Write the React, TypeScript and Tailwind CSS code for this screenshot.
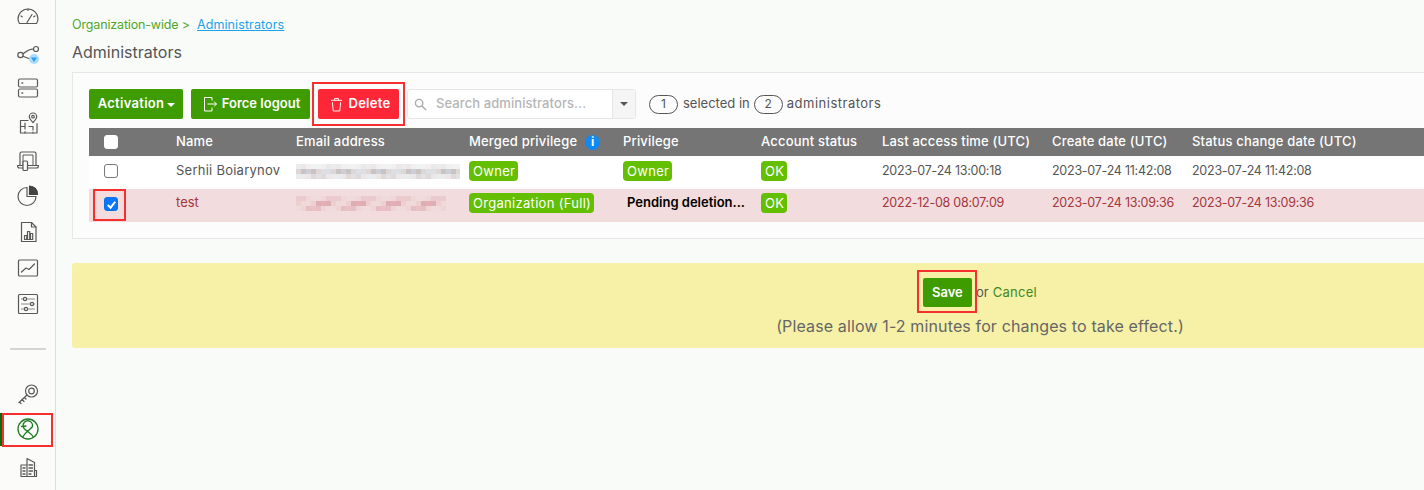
import type { ReactNode } from "react";

const font = "font-['Inter','Liberation_Sans',sans-serif]";
const gridCols = "grid grid-cols-[87px_120px_173px_154px_138px_121px_170px_140px_1fr]";

function SideIcon({ className, children }: { className?: string; children: ReactNode }) {
  return (
    <svg
      viewBox="0 0 28 28"
      fill="none"
      stroke="#585858"
      strokeWidth="1.2"
      strokeLinecap="round"
      strokeLinejoin="round"
      className={`block h-7 w-7 shrink-0 ${className ?? ""}`}
    >
      {children}
    </svg>
  );
}

function Sidebar() {
  return (
    <aside className="relative flex h-full w-[56px] shrink-0 flex-col items-center border-r border-[#dcdedc] bg-[#fbfcfa] pt-[2px]">
      <SideIcon>
        <path d="M5.500 21.500H22.500Q24 19 24 17A10 10 0 0 0 4 17Q4 19 5.500 21.500Z" />
        <path d="M13 20.500 18 12.500M14 7v1.500M7 14l1.200.8M21 14l-1.200.8" />
      </SideIcon>
      <SideIcon className="mt-[11px]">
        <circle cx="6.500" cy="14" r="2.700" />
        <circle cx="22" cy="8" r="2.500" />
        <path d="M9 12.800C12 10.500 14 8 19.500 8M9 15.200 16 18" />
        <circle cx="20" cy="18" r="5" fill="#a9dcff" stroke="none" />
        <path d="M17 16.500h6L20 21Z" fill="#2f9bea" stroke="none" />
      </SideIcon>
      <SideIcon className="mt-[5px]">
        <rect x="4.500" y="5" width="19" height="8" rx="1.500" />
        <rect x="4.500" y="15" width="19" height="8" rx="1.500" />
        <path d="M8 9h.6M8 19h.6" strokeWidth="1.600" />
      </SideIcon>
      <SideIcon className="mt-[9px]">
        <path d="M14 9.500H6.500V22H23V12.500" />
        <path d="M6.500 15.500H11M11 12v6M11 22v-1.500M15 15.500h4V19M19 22v-1" />
        <path d="M19 11.500c-2.200-2.500-3.700-4-3.700-5.800a3.700 3.700 0 0 1 7.400 0c0 1.800-1.500 3.300-3.700 5.800Z" />
        <circle cx="19" cy="5.700" r="1.300" />
      </SideIcon>
      <SideIcon className="mt-[7px]">
        <path d="M6 19V7.500Q6 6 7.500 6h13Q22 6 22 7.500V19" />
        <path d="M9 19V9h10v10" strokeWidth="1" />
        <path d="M3.500 19.500h21Q24.500 22 22.500 22H5.500Q3.500 22 3.500 19.500Z" />
        <rect x="9" y="15" width="4.500" height="9.500" rx="1" fill="#fbfcfa" />
      </SideIcon>
      <SideIcon className="mt-[7px]">
        <path d="M13 6.500A9 9 0 1 0 22 15.500H13Z" />
        <path d="M15.500 5A8 8 0 0 1 23.500 13.500H15.500Z" fill="#444" stroke="#444" />
      </SideIcon>
      <SideIcon className="mt-[9px]">
        <path d="M7.500 4.500H17.500L22 9V23.500H7.500Z" />
        <path d="M17.500 4.500V9H22" />
        <path d="M10.500 17.500h2.200v4h-2.200ZM13.500 13.500h2.200v8h-2.200ZM16.500 15.500h2.200v6h-2.200Z" />
      </SideIcon>
      <SideIcon className="mt-[8px]">
        <rect x="4.500" y="6" width="19" height="16" rx="1" />
        <path d="M7.500 18 12 14l3 1.500 5.500-5.500" />
      </SideIcon>
      <SideIcon className="mt-[8px]">
        <rect x="4.500" y="4.500" width="19" height="19" rx="1" />
        <path d="M7.500 9H20.500M7.500 14H20.500M7.500 19H20.500" stroke="#8a8a8a" />
        <circle cx="11" cy="9" r="1.600" fill="#fbfcfa" />
        <circle cx="18" cy="14" r="1.600" fill="#fbfcfa" />
        <circle cx="12" cy="19" r="1.600" fill="#fbfcfa" />
      </SideIcon>
      <div className="mt-[30px] h-[2px] w-[36px] shrink-0 bg-[#d4d6d4]" />
      <SideIcon className="mt-[30px]">
        <circle cx="17.500" cy="11" r="6" />
        <circle cx="17.500" cy="11" r="2.800" />
        <path d="M13 15 5 22.500M8 19.500l2 2M5.500 22l1.500 1.500M10.500 17.500l1.500 1.500" />
      </SideIcon>
      <SideIcon className="mt-[7px]">
        <g stroke="#1d7a22" strokeWidth="1.300">
          <circle cx="14" cy="14" r="10" />
          <path d="M9 21.500C11 17 16 15 18.500 11.500A4.800 4.800 0 1 0 10 13.500C12 16 17 18 19 21.500" />
          <path d="M7.500 11.500 12 11" />
        </g>
      </SideIcon>
      <SideIcon className="mt-[10px]">
        <path d="M13 23.500V5.500L20.500 9.500V23.500" />
        <path d="M13 12H7V23.500H22.500V17.500H20.500" />
        <path d="M9 15h2M9 18h2M9 21h2M15 12h3.500M15 15h3.500M15 18h3.500M15 21h2" strokeWidth="1.400" />
      </SideIcon>
      <div className="absolute left-0 top-[413px] h-[33px] w-[2px] bg-[#0b6b0b]" />
    </aside>
  );
}

// Blurred-out email address: soft colour blocks, not text
function Mosaic({ tones, width }: { tones: string[]; width: number }) {
  const cells = Math.ceil(width / 5);
  return (
    <svg width={width} height="15" className="block blur-[0.5px]">
      {Array.from({ length: cells * 3 }).map((_, i) => {
        const row = Math.floor(i / cells);
        return (
          <rect
            key={i}
            x={(i % cells) * 5}
            y={row * 5}
            width="5"
            height="5"
            fill={tones[(i * i * 13 + i * 7) % tones.length]}
            opacity={row === 1 ? 0.9 : row === 0 ? 0.35 : 0.55}
          />
        );
      })}
    </svg>
  );
}

function Badge({ children }: { children: ReactNode }) {
  return (
    <span className="inline-block h-[20px] rounded-[4px] bg-[#64bf00] pl-[4px] pr-[3px] text-[13px] leading-[20px] tracking-[0.3px] text-white">
      {children}
    </span>
  );
}

function Checkbox({ checked, white }: { checked?: boolean; white?: boolean }) {
  return (
    <span
      className={`flex h-[14px] w-[14px] items-center justify-center rounded-[3px] border ${
        checked ? "border-[#0b6ff2] bg-[#0b76f7]" : white ? "border-white bg-white" : "border-[#767676] bg-white"
      }`}
    >
      {checked && (
        <svg viewBox="0 0 12 12" className="h-[11px] w-[11px]" fill="none" stroke="#fff" strokeWidth="2.200">
          <path d="M2 6.500 5 9.500 10 3" />
        </svg>
      )}
    </span>
  );
}

function Pill({ children }: { children: ReactNode }) {
  return (
    <span className="flex h-[19px] w-[29px] items-center justify-center rounded-full border border-[#555] text-[12px] text-[#555]">
      {children}
    </span>
  );
}

function Toolbar() {
  return (
    <div className="flex h-[30px] items-center">
      <button className="flex h-[30px] w-[94px] items-center justify-center gap-[3px] rounded-[2px] bg-[#3e9c00] pl-[1px] text-[13px] font-semibold tracking-[0.3px] text-white">
        Activation
        <span className="mt-[1px] h-0 w-0 border-x-[4px] border-t-[4px] border-x-transparent border-t-white" />
      </button>
      <button className="ml-[8px] flex h-[30px] w-[119px] items-center justify-center gap-[4px] rounded-[2px] bg-[#3e9c00] pl-[1px] text-[13px] font-semibold text-white">
        <svg viewBox="0 0 16 16" className="h-[16px] w-[16px]" fill="none" stroke="#fff" strokeWidth="1">
          <path d="M10 4.500V1.500H2.500V15H10V11.500" />
          <path d="M5.500 8H14.500M12 5.500 14.500 8 12 10.500" />
        </svg>
        Force logout
      </button>
      <button className="ml-[8px] flex h-[30px] w-[81px] items-center justify-center gap-[5px] rounded-[2px] bg-[#ff2638] pl-[4px] text-[13px] font-semibold tracking-[0.3px] text-white">
        <svg viewBox="0 0 14 16" className="h-[15px] w-[13px]" fill="none" stroke="#fff" strokeWidth="1">
          <path d="M1 3.500H13M5 3.500V1.500H9V3.500M2.500 5.500 3.500 15H10.500L11.500 5.500" />
        </svg>
        Delete
      </button>
      <div className="ml-[8px] flex h-[30px] w-[229px] items-center rounded-[3px] border border-[#e6e6e6] bg-white">
        <svg viewBox="0 0 14 14" className="ml-[6px] h-[13px] w-[13px]" fill="none" stroke="#aaa" strokeWidth="1.500">
          <circle cx="5.500" cy="5.500" r="4" />
          <path d="M8.500 8.500 13 13" />
        </svg>
        <span className="ml-[9px] flex-1 text-[13px] font-medium tracking-[0.08px] text-[#b5b5b5]">Search administrators...</span>
        <span className="flex h-full w-[23px] items-center justify-center border-l border-[#e6e6e6] bg-[#f5f5f5]">
          <span className="h-0 w-0 border-x-[4px] border-t-[4px] border-x-transparent border-t-[#555]" />
        </span>
      </div>
      <div className="ml-[13px] flex items-center text-[13px] text-[#555]">
        <Pill>1</Pill>
        <span className="ml-[5px]">selected in</span>
        <span className="ml-[4px]"><Pill>2</Pill></span>
        <span className="ml-[4px] tracking-[0.5px]">administrators</span>
      </div>
    </div>
  );
}

function AdminTable() {
  const hd = "flex items-center";
  const date = "text-[12.5px] tracking-[-0.25px]";
  return (
    <div className="mt-[9px] text-[13px]">
      <div className={`${gridCols} h-[28px] bg-[#757575] font-medium tracking-[0.18px] text-white`}>
        <div className="flex items-center pl-[15px]"><Checkbox white /></div>
        <div className={hd}>Name</div>
        <div className={hd}>Email address</div>
        <div className={`${hd} gap-[8px]`}>
          Merged privilege
          <span className="flex h-[15px] w-[15px] items-center justify-center rounded-full bg-[#1089f0] text-[12px] font-bold">i</span>
        </div>
        <div className={hd}>Privilege</div>
        <div className={hd}>Account status</div>
        <div className={hd}>Last access time (UTC)</div>
        <div className={hd}>Create date (UTC)</div>
        <div className={hd}>Status change date (UTC)</div>
      </div>
      <div className={`${gridCols} h-[33px] items-center bg-white pb-[3px] text-[#555]`}>
        <div className="pl-[15px]"><Checkbox /></div>
        <div className="tracking-[0.25px]">Serhii Boiarynov</div>
        <Mosaic tones={["#c9c9d2", "#eeeef0", "#b4b8c8", "#dcd2d2", "#f4f4f4", "#d8dbe0", "#c4bcbc"]} width={164} />
        <div><Badge>Owner</Badge></div>
        <div><Badge>Owner</Badge></div>
        <div><Badge>OK</Badge></div>
        <div className={date}>2023-07-24 13:00:18</div>
        <div className={date}>2023-07-24 11:42:08</div>
        <div className={date}>2023-07-24 11:42:08</div>
      </div>
      <div className={`${gridCols} h-[33px] items-center bg-[#f2dcdd] pb-[5px] text-[#a3363d]`}>
        <div className="pl-[15px] pt-[2px]"><Checkbox checked /></div>
        <div>test</div>
        <Mosaic tones={["#e3a9b0", "#f0d2d4", "#dfa0a8", "#eccdcd", "#e8b8bc", "#efd8d8", "#dca8b0"]} width={150} />
        <div><Badge>Organization (Full)</Badge></div>
        <div className="pl-[4px] font-semibold text-black">Pending deletion...</div>
        <div><Badge>OK</Badge></div>
        <div className={date}>2022-12-08 08:07:09</div>
        <div className={date}>2023-07-24 13:09:36</div>
        <div className={date}>2023-07-24 13:09:36</div>
      </div>
    </div>
  );
}

export default function App() {
  return (
    <div className={`${font} relative flex h-[490px] w-[1424px] overflow-hidden bg-[#f9fbf9] text-[#555]`}>
      <Sidebar />
      <main className="flex w-[1832px] shrink-0 flex-col pl-[16px] pt-[18px]">
        <div className="flex h-[14px] items-center text-[12.5px]">
          <span className="tracking-[-0.15px] text-[#4fa82a]">Organization-wide &gt;</span>
          <a className="ml-[7px] tracking-[0.1px] text-[#1ba3ea] underline">Administrators</a>
        </div>
        <h1 className="mt-[11px] text-[16px] leading-[18px] font-normal text-[#555]">Administrators</h1>
        <section className="mt-[11px] h-[167px] border border-[#e6e8e6] bg-[#fcfcfc] pl-[16px] pr-[16px] pt-[16px]">
          <Toolbar />
          <AdminTable />
        </section>
        <section className="mt-[24px] flex h-[85px] flex-col items-center rounded-[3px] bg-[#f6f1a6] pt-[15px]">
          <div className="flex h-[29px] items-center">
            <button className="h-[29px] w-[49px] rounded-[2px] bg-[#3e9c00] text-[13px] font-semibold text-white">Save</button>
            <span className="ml-[4px] text-[13px] text-[#555]">or</span>
            <a className="ml-[4px] text-[13px] tracking-[0.3px] text-[#3c8a1e]">Cancel</a>
          </div>
          <p className="mt-[9px] text-[16px] leading-[20px] tracking-[0.13px] text-[#666]">(Please allow 1-2 minutes for changes to take effect.)</p>
        </section>
      </main>
      {/* red callouts drawn over the screenshot */}
      <div className="pointer-events-none absolute left-[2px] top-[413px] h-[34px] w-[51px] border-2 border-[#f5302f]" />
      <div className="pointer-events-none absolute left-[312px] top-[82px] h-[44px] w-[93px] border-2 border-[#f5302f]" />
      <div className="pointer-events-none absolute left-[93px] top-[189px] h-[32px] w-[33px] border-2 border-[#f5302f]" />
      <div className="pointer-events-none absolute left-[917px] top-[270px] h-[43px] w-[60px] border-2 border-[#f5302f]" />
    </div>
  );
}
